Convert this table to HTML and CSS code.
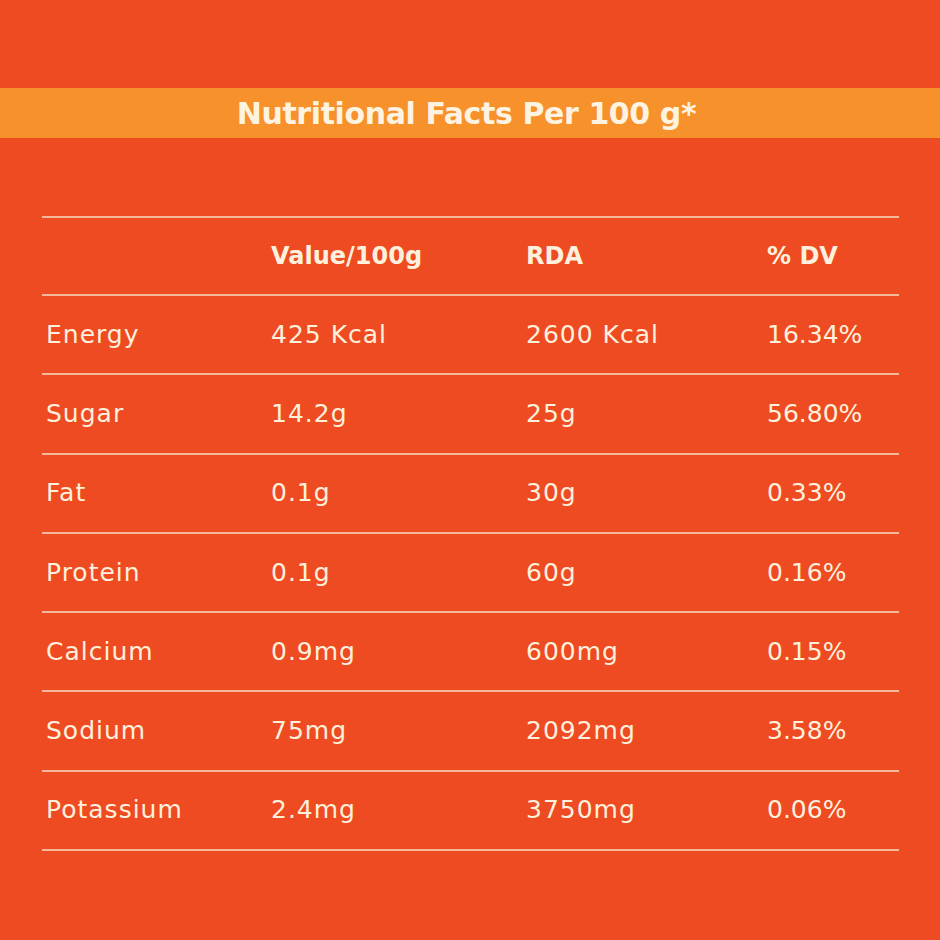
FILE: index.html
```html
<!DOCTYPE html>
<html lang="en">
<head>
<meta charset="utf-8">
<title>Nutritional Facts</title>
<link rel="stylesheet" href="styles.css">
</head>
<body>
<div class="page">
  <div class="band"><h1 class="title">Nutritional Facts Per 100 g*</h1></div>
  <div class="table">
    <div class="row head"><div class="cell"></div><div class="cell">Value/100g</div><div class="cell">RDA</div><div class="cell">% DV</div></div>
    <div class="row"><div class="cell">Energy</div><div class="cell">425 Kcal</div><div class="cell">2600 Kcal</div><div class="cell pct">16.34%</div></div>
    <div class="row"><div class="cell">Sugar</div><div class="cell">14.2g</div><div class="cell">25g</div><div class="cell pct">56.80%</div></div>
    <div class="row"><div class="cell">Fat</div><div class="cell">0.1g</div><div class="cell">30g</div><div class="cell pct">0.33%</div></div>
    <div class="row"><div class="cell">Protein</div><div class="cell">0.1g</div><div class="cell">60g</div><div class="cell pct">0.16%</div></div>
    <div class="row"><div class="cell">Calcium</div><div class="cell">0.9mg</div><div class="cell">600mg</div><div class="cell pct">0.15%</div></div>
    <div class="row"><div class="cell">Sodium</div><div class="cell">75mg</div><div class="cell">2092mg</div><div class="cell pct">3.58%</div></div>
    <div class="row"><div class="cell">Potassium</div><div class="cell">2.4mg</div><div class="cell">3750mg</div><div class="cell pct">0.06%</div></div>
  </div>
</div>
</body>
</html>
```
FILE: styles.css
```css
html, body {
  margin: 0;
  padding: 0;
}
body {
  background: #ee4b22;
  font-family: "DejaVu Sans", "Noto Sans", sans-serif;
  color: #fdf0dc;
}
.page {
  width: 940px;
  height: 940px;
  padding-top: 88px;
  box-sizing: border-box;
}
.band {
  height: 50px;
  background: #f7912b;
  display: flex;
  align-items: center;
  justify-content: center;
}
.title {
  margin: 0;
  font-size: 30px;
  font-weight: 700;
  letter-spacing: -0.4px;
  color: #fdf3e0;
  padding-right: 7px;
}
.table {
  margin: 78px 41px 0 42px;
  border-top: 2px solid #f6b89a;
}
.row {
  display: grid;
  grid-template-columns: 225px 255px 241px 1fr;
  height: 79.3px;
  box-sizing: border-box;
  border-bottom: 2px solid #f6b89a;
  align-items: center;
  font-size: 25px;
  letter-spacing: 1px;
}
.cell {
  padding-left: 4px;
  padding-bottom: 1px;
}
.pct {
  letter-spacing: 0;
}
.head {
  font-weight: 700;
  height: 78px;
  font-size: 24px;
  letter-spacing: 0;
}
```
